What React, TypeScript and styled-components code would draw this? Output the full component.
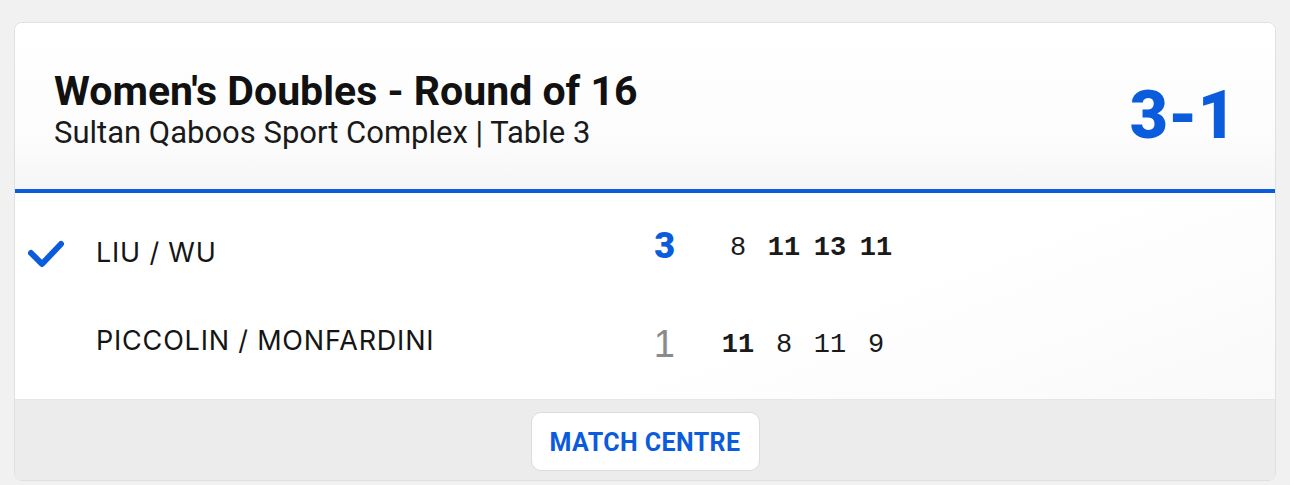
import styled, { createGlobalStyle } from 'styled-components'

const GlobalStyle = createGlobalStyle`
  html, body {
    margin: 0;
    padding: 0;
    background: #f1f1f1;
  }
  body {
    font-family: Roboto, 'Liberation Sans', Arial, sans-serif;
  }
`

const Page = styled.div`
  padding: 22px 14px 4px;
`

const Card = styled.div`
  height: 459px;
  box-sizing: border-box;
  border: 1px solid #e0e0e0;
  border-radius: 8px;
  overflow: hidden;
  background: #fff;
  display: flex;
  flex-direction: column;
`

const Header = styled.div`
  height: 170px;
  flex-shrink: 0;
  box-sizing: border-box;
  padding: 0 39px 0 39px;
  display: flex;
  align-items: center;
  justify-content: space-between;
  background: linear-gradient(180deg, #ffffff 0%, #fcfcfc 70%, #f6f6f6 100%);
  border-bottom: 4px solid #0a5cdc;
`

const TitleBlock = styled.div`
  display: flex;
  flex-direction: column;
  gap: 2px;
  margin-top: 6px;
`

const Title = styled.h1`
  margin: 0;
  font-size: 41px;
  line-height: 46px;
  font-weight: 700;
  color: #111;
`

const Subtitle = styled.div`
  font-size: 31px;
  line-height: 34px;
  color: #1a1a1a;
`

const Total = styled.div`
  font-family: Roboto, 'Liberation Sans', sans-serif;
  font-weight: 900;
  font-size: 66px;
  line-height: 1;
  color: #0a5cdc;
  margin-top: 20px;
`

const Body = styled.div`
  flex: 1;
  padding: 12px 0 0;
  background: linear-gradient(160deg, #ffffff 60%, #f9f9f9 100%);
`

const Row = styled.div`
  height: 90px;
  display: grid;
  grid-template-columns: 81px 545px 34px 40px auto;
  align-items: center;
`

const Check = styled.div`
  display: flex;
  align-items: center;
  padding-left: 13px;
  padding-top: 8px;
`

const Name = styled.div<{ $won?: boolean }>`
  font-family: Inter, 'Liberation Sans', sans-serif;
  font-size: 27px;
  letter-spacing: 0.8px;
  color: #151515;
  margin-top: ${(p) => (p.$won ? '4px' : '0')};
`

const Sets = styled.div<{ $won?: boolean }>`
  text-align: right;
  font-family: ${(p) => (p.$won ? "Roboto, sans-serif" : "'Liberation Sans', sans-serif")};
  font-weight: ${(p) => (p.$won ? 900 : 400)};
  font-size: ${(p) => (p.$won ? '36px' : '38px')};
  color: ${(p) => (p.$won ? '#0a5cdc' : '#8a8a8a')};
  margin-top: ${(p) => (p.$won ? '-8px' : '8px')};
`

const Games = styled.div<{ $won?: boolean }>`
  grid-column: 5;
  display: flex;
  margin-top: ${(p) => (p.$won ? '-4px' : '10px')};
`

const Game = styled.span<{ $won?: boolean }>`
  width: 46px;
  text-align: center;
  font-family: 'Liberation Mono', 'DejaVu Sans Mono', monospace;
  font-size: 27px;
  font-weight: ${(p) => (p.$won ? 700 : 400)};
  color: #1a1a1a;
`

const Footer = styled.div`
  height: 80px;
  flex-shrink: 0;
  border-top: 1px solid #e6e6e6;
  background: #ececec;
  display: flex;
  align-items: center;
  justify-content: center;
`

const Button = styled.button`
  width: 229px;
  height: 59px;
  margin-top: 2px;
  border: 1px solid #dcdcdc;
  border-radius: 10px;
  background: #fff;
  color: #0a5cdc;
  font-family: Roboto, 'Liberation Sans', sans-serif;
  font-weight: 700;
  font-size: 25px;
  letter-spacing: 0.4px;
  padding: 3px 0 0;
  cursor: pointer;
`

const CheckIcon = () => (
  <svg width="36" height="28" viewBox="0 0 36 28" fill="none">
    <path d="M3 13 L14 24 L33 4" stroke="#0a5cdc" strokeWidth="6" strokeLinecap="round" strokeLinejoin="round" />
  </svg>
)

type Player = {
  name: string
  sets: number
  games: number[]
  won: boolean
}

const players: Player[] = [
  { name: 'LIU / WU', sets: 3, games: [8, 11, 13, 11], won: true },
  { name: 'PICCOLIN / MONFARDINI', sets: 1, games: [11, 8, 11, 9], won: false },
]

export default function App() {
  return (
    <Page>
      <GlobalStyle />
      <Card>
        <Header>
          <TitleBlock>
            <Title>Women's Doubles - Round of 16</Title>
            <Subtitle>Sultan Qaboos Sport Complex | Table 3</Subtitle>
          </TitleBlock>
          <Total>3-1</Total>
        </Header>
        <Body>
          {players.map((p, i) => {
            const other = players[1 - i]
            return (
              <Row key={p.name}>
                <Check>{p.won && <CheckIcon />}</Check>
                <Name $won={p.won}>{p.name}</Name>
                <Sets $won={p.won}>{p.sets}</Sets>
                <Games $won={p.won}>
                  {p.games.map((g, j) => (
                    <Game key={j} $won={g > other.games[j]}>
                      {g}
                    </Game>
                  ))}
                </Games>
              </Row>
            )
          })}
        </Body>
        <Footer>
          <Button>MATCH CENTRE</Button>
        </Footer>
      </Card>
    </Page>
  )
}
